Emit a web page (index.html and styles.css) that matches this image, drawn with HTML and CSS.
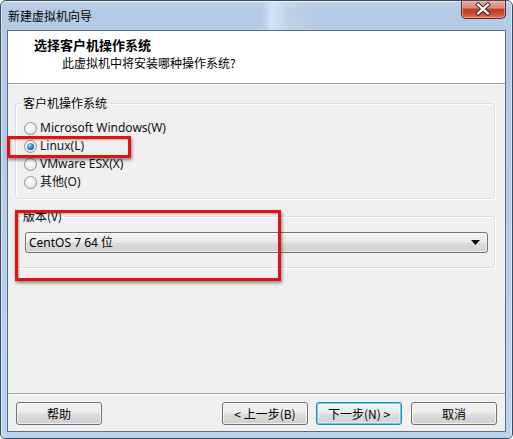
FILE: index.html
```html
<!DOCTYPE html>
<html lang="zh-CN">
<head>
<meta charset="utf-8">
<title>新建虚拟机向导</title>
<link rel="stylesheet" href="styles.css">
</head>
<body>
<div class="window">
  <div class="titlebar">
    <span class="title">新建虚拟机向导</span>
    <div class="close">
      <svg width="45" height="18" viewBox="0 0 45 18">
        <path d="M17.5 4.5 L27.5 13.5 M27.5 4.5 L17.5 13.5" stroke="#3a1a14" stroke-width="4.2" stroke-linecap="square"/>
        <path d="M17.5 4.5 L27.5 13.5 M27.5 4.5 L17.5 13.5" stroke="#ffffff" stroke-width="2.4" stroke-linecap="square"/>
      </svg>
    </div>
  </div>
  <div class="client">
    <div class="header">
      <div class="h-title">选择客户机操作系统</div>
      <div class="h-sub">此虚拟机中将安装哪种操作系统?</div>
    </div>
    <div class="body">
      <fieldset class="group g-os">
        <legend>客户机操作系统</legend>
        <div class="g-inner os-list">
          <div class="radio-row"><span class="radio"></span><span>Microsoft Windows(W)</span></div>
          <div class="radio-row"><span class="radio checked"></span><span>Linux(L)</span></div>
          <div class="radio-row"><span class="radio"></span><span>VMware ESX(X)</span></div>
          <div class="radio-row"><span class="radio"></span><span>其他(O)</span></div>
        </div>
      </fieldset>
      <fieldset class="group g-ver">
        <legend>版本(V)</legend>
        <div class="g-inner ver-inner">
          <div class="combo">
            <span class="combo-text">CentOS 7 64 位</span>
            <svg class="combo-arrow" width="9" height="5" viewBox="0 0 9 5"><path d="M0 0 H9 L4.5 5 Z" fill="#000"/></svg>
          </div>
        </div>
      </fieldset>
    </div>
    <div class="footer">
      <button class="btn">帮助</button>
      <button class="btn push">&lt; 上一步(B)</button>
      <button class="btn default">下一步(N) &gt;</button>
      <button class="btn cancel">取消</button>
    </div>
  </div>
  <div class="mark mark-linux"></div>
  <div class="mark mark-ver"></div>
</div>
</body>
</html>
```

FILE: styles.css
```css
html, body {
  margin: 0;
  padding: 0;
  background: #ffffff;
}
body {
  font-family: "Noto Sans", "Noto Sans CJK SC", sans-serif;
  font-size: 12px;
  color: #000;
}
.window {
  position: relative;
  box-sizing: border-box;
  width: 513px;
  height: 439px;
  border: 1px solid #3e4d5e;
  border-radius: 6px 6px 5px 5px;
  background: linear-gradient(180deg, #b2c8e4 0%, #b4cbe8 30%, #b6cfee 65%, #b9d4f2 100%);
  box-shadow: inset 0 1px 0 rgba(255,255,255,0.7), inset 1px 0 0 rgba(255,255,255,0.5), inset -1px 0 0 rgba(255,255,255,0.5);
  display: flex;
  flex-direction: column;
  overflow: hidden;
}
.titlebar {
  position: relative;
  height: 29px;
  display: flex;
  align-items: flex-start;
  background:
    linear-gradient(90deg, rgba(255,255,255,0) 0%, rgba(255,255,255,0) 51%, rgba(225,238,255,0.7) 53%, rgba(255,255,255,0.15) 56%, rgba(255,255,255,0) 62%),
    linear-gradient(180deg, rgba(255,255,255,0.15) 0%, rgba(255,255,255,0) 40%, rgba(255,255,255,0.05) 100%);
}
.title {
  font-family: "Noto Sans CJK SC", sans-serif;
  font-size: 12px;
  line-height: 16px;
  margin: 7px 0 0 7px;
  color: #000;
}
.close {
  margin-left: auto;
  margin-right: 6px;
  width: 45px;
  height: 18px;
  box-sizing: border-box;
  border: 1px solid #5a2a22;
  border-top: none;
  border-radius: 0 0 5px 5px;
  background: linear-gradient(180deg, #e9a99c 0%, #d98a7a 40%, #c33a25 50%, #cc4a30 75%, #e0785e 100%);
  box-shadow: inset 0 0 0 1px rgba(255,200,190,0.5);
  display: flex;
}
.close svg { display: block; margin: -1px 0 0 -1px; }
.client {
  flex: 1;
  margin: 0 6px 6px 6px;
  border: 1px solid #5d6f86;
  background: #f0f0f0;
  display: flex;
  flex-direction: column;
  min-height: 0;
}
.header {
  height: 52px;
  background: #ffffff;
  border-bottom: 1px solid #a0a0a0;
  box-shadow: 0 1px 0 #ffffff;
  box-sizing: content-box;
}
.h-title {
  font-family: "Noto Sans CJK SC", sans-serif;
  font-weight: bold;
  font-size: 13px;
  line-height: 16px;
  margin: 6px 0 0 26px;
}
.h-sub {
  font-family: "Noto Sans CJK SC", sans-serif;
  font-size: 12px;
  line-height: 16px;
  margin: 2px 0 0 54px;
}
.body {
  flex: 1;
  padding: 1px 10px 0 7px;
  margin-top: 1px;
}
.group {
  margin: 0;
  padding: 0;
  border: 1px solid #d5dfe5;
  border-radius: 3px;
  box-shadow: inset 1px 1px 0 #ffffff, 1px 1px 0 #ffffff;
  min-width: 0;
}
.group legend {
  font-family: "Noto Sans CJK SC", sans-serif;
  font-size: 12px;
  line-height: 16px;
  padding: 0 2px;
  margin-left: 5px;
}
.g-os { margin-top: 9px; }
.os-list {
  padding: 8px 0 7px 8px;
  display: flex;
  flex-direction: column;
}
.radio-row {
  height: 18px;
  display: flex;
  align-items: center;
  gap: 3px;
  line-height: 16px;
  font-family: "Noto Sans", "Noto Sans CJK SC", sans-serif;
  font-size: 12px;
  color: #111;
}
.radio {
  width: 13px;
  height: 13px;
  box-sizing: border-box;
  border-radius: 50%;
  border: 1px solid #8e8f8f;
  background: radial-gradient(circle at 40% 35%, #ffffff 0%, #f4f4f4 40%, #d8d8d8 100%);
  position: relative;
  flex: none;
}
.radio.checked::after {
  content: "";
  position: absolute;
  left: 2px;
  top: 2px;
  width: 7px;
  height: 7px;
  border-radius: 50%;
  background: radial-gradient(circle at 35% 30%, #a6e0ff 0%, #2a8ad4 45%, #0c3f82 100%);
}
.g-ver { margin-top: 9px; }
.ver-inner {
  padding: 8px 6px 14px 9px;
}
.combo {
  height: 21px;
  box-sizing: border-box;
  border: 1px solid #707070;
  border-radius: 3px;
  background: linear-gradient(180deg, #f2f2f2 0%, #ebebeb 48%, #dddddd 52%, #cfcfcf 100%);
  box-shadow: inset 0 0 0 1px rgba(255,255,255,0.6);
  display: flex;
  align-items: center;
  padding: 0 7px 0 3px;
}
.combo-text {
  font-family: "Noto Sans", "Noto Sans CJK SC", sans-serif;
  font-size: 12px;
  line-height: 16px;
}
.combo-arrow { margin-left: auto; display: block; }
.footer {
  height: 38px;
  border-top: 1px solid #a0a0a0;
  box-shadow: inset 0 1px 0 #ffffff;
  display: flex;
  align-items: flex-start;
  padding: 8px 8px 0 8px;
  box-sizing: border-box;
  gap: 8px;
}
.btn {
  width: 86px;
  height: 23px;
  box-sizing: border-box;
  border: 1px solid #707070;
  border-radius: 3px;
  background: linear-gradient(180deg, #f2f2f2 0%, #ebebeb 48%, #dddddd 52%, #cfcfcf 100%);
  box-shadow: inset 0 0 0 1px rgba(255,255,255,0.7);
  font-family: "Noto Sans CJK SC", "Noto Sans", sans-serif;
  font-size: 12px;
  line-height: 16px;
  color: #000;
  padding: 0;
}
.btn.push { margin-left: auto; }
.btn.cancel { margin-left: 1px; }
.btn.default {
  border-color: #3c7fb1;
  box-shadow: inset 0 0 0 1px #48d7fb, inset 0 0 0 2px rgba(255,255,255,0.5);
}
.mark {
  position: absolute;
  box-sizing: border-box;
  border: 3px solid #e21212;
  box-shadow: 1px 2px 3px rgba(0,0,0,0.45), inset 1px 1px 2px rgba(0,0,0,0.3);
}
.mark-linux {
  left: 6px;
  top: 135px;
  width: 124px;
  height: 22px;
}
.mark-ver {
  left: 14px;
  top: 209px;
  width: 266px;
  height: 71px;
}
```
